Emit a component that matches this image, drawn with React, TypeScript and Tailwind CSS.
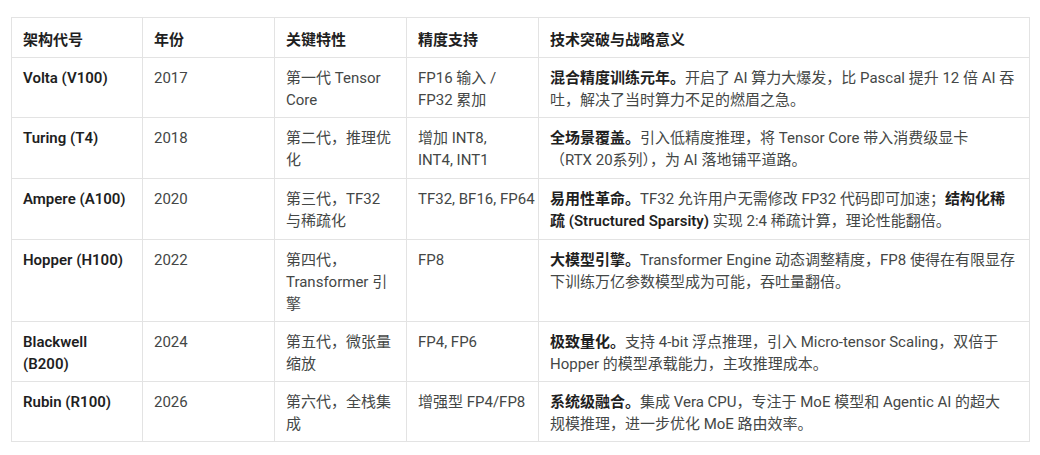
const B = ({ children }: { children: React.ReactNode }) => (
  <b className="font-semibold text-[#1f1f1f]">{children}</b>
);

const rows: { arch: React.ReactNode; year: string; feat: string; prec: React.ReactNode; sig: React.ReactNode }[] = [
  {
    arch: "Volta (V100)",
    year: "2017",
    feat: "第一代 Tensor Core",
    prec: "FP16 输入 / FP32 累加",
    sig: (
      <>
        <B>混合精度训练元年。</B>开启了 AI 算力大爆发，比 Pascal 提升 12 倍 AI 吞吐，解决了当时算力不足的燃眉之急。
      </>
    ),
  },
  {
    arch: "Turing (T4)",
    year: "2018",
    feat: "第二代，推理优化",
    prec: (
      <>
        增加 INT8,
        <br />
        INT4, INT1
      </>
    ),
    sig: (
      <>
        <B>全场景覆盖。</B>引入低精度推理，将 Tensor Core 带入消费级显卡
        <br />
        （RTX 20系列），为 AI 落地铺平道路。
      </>
    ),
  },
  {
    arch: "Ampere (A100)",
    year: "2020",
    feat: "第三代，TF32 与稀疏化",
    prec: <span className="whitespace-nowrap">TF32, BF16, FP64</span>,
    sig: (
      <>
        <B>易用性革命。</B>TF32 允许用户无需修改 FP32 代码即可加速；<B>结构化稀疏 (Structured Sparsity)</B> 实现 2:4 稀疏计算，理论性能翻倍。
      </>
    ),
  },
  {
    arch: "Hopper (H100)",
    year: "2022",
    feat: "第四代，Transformer 引擎",
    prec: "FP8",
    sig: (
      <>
        <B>大模型引擎。</B>Transformer Engine 动态调整精度，FP8 使得在有限显存下训练万亿参数模型成为可能，吞吐量翻倍。
      </>
    ),
  },
  {
    arch: "Blackwell (B200)",
    year: "2024",
    feat: "第五代，微张量缩放",
    prec: "FP4, FP6",
    sig: (
      <>
        <B>极致量化。</B>支持 4-bit 浮点推理，引入 Micro-tensor Scaling，双倍于 Hopper 的模型承载能力，主攻推理成本。
      </>
    ),
  },
  {
    arch: "Rubin (R100)",
    year: "2026",
    feat: "第六代，全栈集成",
    prec: "增强型 FP4/FP8",
    sig: (
      <>
        <B>系统级融合。</B>集成 Vera CPU，专注于 MoE 模型和 Agentic AI 的超大
        <br />
        规模推理，进一步优化 MoE 路由效率。
      </>
    ),
  },
];

const headers = ["架构代号", "年份", "关键特性", "精度支持", "技术突破与战略意义"];

const cell = "border-r border-b border-[#e3e3e3] px-[11px] pt-[9px]";

export default function App() {
  return (
    <div
      className="w-[1040px] h-[455px] bg-white pt-[17px] pl-[11px] text-[15px] leading-[22px] text-[#444746]"
      style={{ fontFamily: 'Roboto, "Noto Sans CJK SC", sans-serif' }}
    >
      <div className="grid w-[1019px] grid-cols-[131px_132px_132px_132px_491px] grid-rows-[40px_60px_61px_61px_82px_60px_60px] border-l border-t border-[#e3e3e3]">
        {headers.map((h) => (
          <div key={h} className={`${cell} pt-[11px] font-bold text-[#1f1f1f]`}>
            {h}
          </div>
        ))}
        {rows.map((r) => (
          <div key={r.year} className="contents">
            <div className={`${cell} font-semibold text-[#1f1f1f]`}>{r.arch}</div>
            <div className={cell}>{r.year}</div>
            <div className={cell}>{r.feat}</div>
            <div className={cell}>{r.prec}</div>
            <div className={cell}>{r.sig}</div>
          </div>
        ))}
      </div>
    </div>
  );
}
